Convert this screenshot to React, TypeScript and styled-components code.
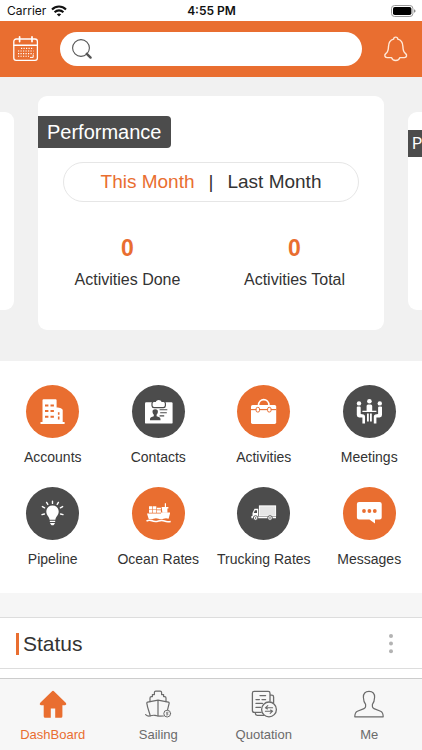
import React from "react";
import styled, { createGlobalStyle } from "styled-components";

const orange = "#e96e30";
const dark = "#4c4c4c";

const GlobalStyle = createGlobalStyle`
  * { box-sizing: border-box; }
  body { margin: 0; background: #fff; font-family: "Liberation Sans", Arial, sans-serif; color: #333; }
  button, input { font: inherit; color: inherit; }
  button { border: 0; padding: 0; background: none; cursor: pointer; }
  svg { display: block; }
`;

const Screen = styled.div`
  display: flex;
  flex-direction: column;
  height: 100vh;
  overflow: hidden;
`;

const StatusBar = styled.div`
  display: grid;
  grid-template-columns: 1fr auto 1fr;
  align-items: center;
  height: 21px;
  flex: none;
  padding: 0 6px 0 7px;
  font-family: Inter, sans-serif;
  font-size: 12px;
  line-height: 21px;
  color: #111;
`;

const Carrier = styled.span`
  display: flex;
  align-items: center;
  gap: 5px;
`;

const Clock = styled.time`
  font-weight: 600;
`;

const Battery = styled.span`
  justify-self: end;
`;

const Header = styled.header`
  display: grid;
  grid-template-columns: 60px 1fr 60px;
  align-items: center;
  height: 56px;
  flex: none;
  background: ${orange};
`;

const HeaderButton = styled.button<{ $side: "left" | "right" }>`
  justify-self: ${(p) => (p.$side === "left" ? "start" : "end")};
  margin: 0 12px;
`;

const SearchBox = styled.label`
  display: flex;
  align-items: center;
  gap: 8px;
  height: 34px;
  padding: 0 16px 0 11px;
  border-radius: 17px;
  background: #fff;
`;

const SearchInput = styled.input`
  flex: 1;
  min-width: 0;
  border: 0;
  outline: 0;
  background: transparent;
  font-size: 16px;
`;

const Main = styled.main`
  flex: 1;
  min-height: 0;
  overflow: hidden;
`;

const Carousel = styled.section`
  display: flex;
  justify-content: center;
  align-items: flex-start;
  gap: 24px;
  padding: 19px 0 31px;
  overflow: hidden;
  background: #f1f1f1;
`;

const Card = styled.article<{ $side?: boolean }>`
  flex: 0 0 calc(100% - 76px);
  height: ${(p) => (p.$side ? "198px" : "234px")};
  margin-top: ${(p) => (p.$side ? "16px" : "0")};
  padding-top: ${(p) => (p.$side ? "18px" : "20px")};
  border-radius: 9px;
  background: #fff;
`;

const Tag = styled.h2<{ $side?: boolean }>`
  width: fit-content;
  margin: 0;
  padding: ${(p) => (p.$side ? "0 4px" : "0 9px")};
  border-radius: 0 4px 4px 0;
  background: ${dark};
  color: #fff;
  font-family: ${(p) => (p.$side ? "Roboto, sans-serif" : "inherit")};
  font-weight: 400;
  font-size: ${(p) => (p.$side ? "16px" : "20px")};
  line-height: ${(p) => (p.$side ? "27px" : "32px")};
`;

const PeriodSwitch = styled.div`
  display: flex;
  justify-content: center;
  align-items: center;
  gap: 14px;
  height: 40px;
  margin: 14px 25px 0;
  border: 1px solid #e6e6e6;
  border-radius: 20px;
  font-size: 19px;
`;

const Period = styled.button<{ $active?: boolean }>`
  color: ${(p) => (p.$active ? orange : "#333")};
`;

const Stats = styled.dl`
  display: grid;
  grid-template-columns: 1fr 1fr;
  margin: 32px 6px 0;
`;

const Stat = styled.div`
  display: flex;
  flex-direction: column-reverse;
  gap: 8px;
  text-align: center;
`;

const StatName = styled.dt`
  font-size: 16px;
  line-height: 20px;
`;

const StatValue = styled.dd`
  margin: 0;
  font-size: 23px;
  line-height: 28px;
  font-weight: 700;
  color: ${orange};
`;

const Shortcuts = styled.nav`
  display: grid;
  grid-template-columns: repeat(4, 1fr);
  row-gap: 20px;
  padding: 24px 0 24px;
`;

const Shortcut = styled.a`
  display: flex;
  flex-direction: column;
  align-items: center;
  gap: 9px;
  color: inherit;
  text-decoration: none;
  font-size: 14px;
  line-height: 20px;
  white-space: nowrap;
`;

const Disc = styled.span<{ $color: string }>`
  width: 53px;
  height: 53px;
  border-radius: 50%;
  background: ${(p) => p.$color};
  color: ${(p) => p.$color};
`;

const StatusSection = styled.section`
  padding-top: 24px;
  background: #f6f6f6;
`;

const StatusHead = styled.div`
  display: flex;
  align-items: center;
  justify-content: space-between;
  height: 52px;
  padding: 2px 25px 0 16px;
  border-top: 1px solid #ddd;
  border-bottom: 1px solid #ddd;
  background: #fff;
`;

const StatusTitle = styled.h2`
  display: flex;
  align-items: center;
  gap: 4px;
  margin: 0;
  font-size: 21px;
  line-height: 24px;
  font-weight: 400;
  &::before {
    content: "";
    width: 3px;
    height: 22px;
    background: ${orange};
  }
`;

const StatusBody = styled.div`
  height: 40px;
  background: #fff;
`;

const TabBar = styled.nav`
  display: grid;
  grid-template-columns: repeat(4, 1fr);
  height: 72px;
  flex: none;
  padding-top: 11px;
  border-top: 1px solid #ccc;
  background: #f7f7f7;
`;

const Tab = styled.a<{ $active?: boolean }>`
  display: flex;
  flex-direction: column;
  align-items: center;
  gap: 9px;
  color: ${(p) => (p.$active ? orange : "#6b6b6b")};
  text-decoration: none;
  font-size: 13px;
  line-height: 15px;
`;

const CalendarIcon = () => (
  <svg width="27" height="28" viewBox="0 0 27 28" fill="none" stroke="#fff" strokeLinecap="round">
    <rect x="1.8" y="4" width="23.6" height="21.4" rx="2.4" strokeWidth="1.3" />
    <path d="M2 10.3H25" strokeWidth="1.5" />
    <path d="M7.6 1.8V6.6M20 1.8V6.6" strokeWidth="1.7" />
    <g strokeWidth="1.1" strokeDasharray="1.2 1.3" strokeLinecap="butt">
      <path d="M9 13.4H21.6M6 16H21.6M6 18.6H21.6M6 21.2H17" />
    </g>
    <path d="M18.4 22.4H21.2V20" strokeWidth="1" />
  </svg>
);

const BellIcon = () => (
  <svg width="28" height="28" viewBox="0 0 28 28" fill="none" stroke="#ffe9d8" strokeWidth="1.4" strokeLinejoin="round" strokeLinecap="round">
    <path d="M11.6 4.2C11.8 1.4 15.6 1.4 15.8 4.2C19.4 5.2 20.8 8 20.9 11.4C21 15.4 21.6 17 23.4 18.4C25.4 20 24.8 22.4 22.4 22.6H17.8C16.8 26.4 10.6 26.4 9.6 22.6H5C2.6 22.4 2 20 4 18.4C5.8 17 6.4 15.4 6.5 11.4C6.6 8 8 5.2 11.6 4.2Z" />
  </svg>
);

const SearchIcon = () => (
  <svg width="22" height="22" viewBox="0 0 22 22" fill="none" stroke="#555">
    <circle cx="10" cy="10" r="8.4" strokeWidth="1.1" />
    <path d="M15.8 15.8L19.6 19.6" strokeWidth="2.4" strokeLinecap="round" />
  </svg>
);

const WifiIcon = () => (
  <svg width="16" height="12" viewBox="0 0 16 12" fill="none" stroke="#111" strokeWidth="2.1">
    <path d="M1 4.4C5 .5 11 .5 15 4.4M3.6 7.2C6.1 4.8 9.9 4.8 12.4 7.2" />
    <path d="M5.8 9.3C7.1 8.1 8.9 8.1 10.2 9.3L8 11.6Z" fill="#111" stroke="none" />
  </svg>
);

const BatteryIcon = () => (
  <svg width="25" height="12" viewBox="0 0 25 12">
    <rect x=".5" y=".5" width="21.4" height="11" rx="3" fill="none" stroke="#999" />
    <rect x="2" y="2" width="18.4" height="8" rx="1.8" />
    <path d="M23 4.2Q24.6 5 24.6 6T23 7.8Z" fill="#888" />
  </svg>
);

const DotsIcon = () => (
  <svg width="12" height="24" viewBox="0 0 12 24" fill="#b3b3b3">
    <circle cx="6" cy="4" r="2" />
    <circle cx="6" cy="11.6" r="2" />
    <circle cx="6" cy="19.2" r="2" />
  </svg>
);

const DiscSvg = ({ children }: { children: React.ReactNode }) => (
  <svg width="53" height="53" viewBox="0 0 53 53" fill="#fff" aria-hidden="true">
    {children}
  </svg>
);

const AccountsIcon = () => (
  <DiscSvg>
    <path d="M16.5 15.2Q16.5 14.2 17.5 14.2H29.6Q30.6 14.2 30.6 15.2V22.4C34 22.6 36.7 23.6 36.7 25V37H38.6V39H14.5V37H16.5Z" />
    <path d="M19 19.5h3.4v1.9H19zM24.5 19.5h3.4v1.9h-3.4zM19 25h3.4v1.9H19zM24.5 25h3.4v1.9h-3.4zM19 30.8h3.4v1.9H19zM24.5 30.8h3.4v1.9h-3.4zM31.9 27.2h1.6v2.6h-1.6zM31.9 31.6h1.6v3h-1.6z" fill="currentColor" />
  </DiscSvg>
);

const ContactsIcon = () => (
  <DiscSvg>
    <rect x="13" y="17.3" width="27.6" height="21.3" rx="1.2" />
    <path d="M23.4 16.4Q24 14.4 26.7 14.4T30 16.4H31.6Q33.4 16.6 33.4 18.6V20.6Q33.2 22.6 31.4 22.6H22Q20.2 22.6 20 20.6V18.6Q20 16.6 21.8 16.4Z" stroke="currentColor" strokeWidth="1.2" />
    <g fill="currentColor">
      <path d="M23.2 24.2C25.3 24.2 26 25.4 25.9 26.7C25.8 28 25.2 29 24.6 29.6V31.2C26.7 31.7 28.5 32.3 28.5 33.9V35.2H18V33.9C18 32.3 19.7 31.7 21.8 31.2V29.6C21.2 29 20.6 28 20.5 26.7C20.4 25.4 21.1 24.2 23.2 24.2Z" />
      <path d="M27.6 24.2h7.7v1.1h-7.7zM28.2 27.2h6.6v1.1h-6.6zM27.6 30.3h4.6v1.1h-4.6z" />
    </g>
  </DiscSvg>
);

const ActivitiesIcon = () => (
  <DiscSvg>
    <path d="M21.5 20.2C21.7 12.8 31.8 12.8 32 20.2" fill="none" stroke="#fff" strokeWidth="1.6" />
    <rect x="14" y="20" width="25.2" height="18.9" rx="1.6" />
    <path d="M14 24.6H39.2" stroke="currentColor" strokeWidth="1.1" />
    <g stroke="currentColor" strokeWidth="1">
      <rect x="19.1" y="22.4" width="3.4" height="4.6" rx="1.4" />
      <rect x="30.6" y="22.4" width="3.4" height="4.6" rx="1.4" />
    </g>
  </DiscSvg>
);

const MeetingsIcon = () => (
  <DiscSvg>
    <circle cx="16" cy="18.4" r="2.2" />
    <circle cx="26.4" cy="16.2" r="2.3" />
    <circle cx="36.8" cy="18.4" r="2.2" />
    <path d="M13.8 22.2Q13.8 21.4 14.8 21.4H16.6Q17.6 21.4 17.7 22.4V29L20.6 29.6Q22 30 22 31.4V38.6H19.4V32.6H16.2Q13.8 32.4 13.8 30Z" />
    <path d="M39 22.2Q39 21.4 38 21.4H36.2Q35.2 21.4 35.1 22.4V29L32.2 29.6Q30.8 30 30.8 31.4V38.6H33.4V32.6H36.6Q39 32.4 39 30Z" />
    <path d="M19.4 25.7H33.4V27H19.4ZM23.6 25.8V21Q23.6 19.4 25 19.4H27.8Q29.2 19.4 29.2 21V25.8ZM24 28.4h1.8v8H24zM27 28.4h1.8v8H27z" />
  </DiscSvg>
);

const PipelineIcon = () => (
  <DiscSvg>
    <path d="M26.5 18.5C30.3 18.5 32.7 21.2 32.7 24.5C32.7 28.4 29.6 29.7 29.4 32.8H23.6C23.4 29.7 20.3 28.4 20.3 24.5C20.3 21.2 22.7 18.5 26.5 18.5ZM23.8 33.7H29.2V35.1H23.8ZM24 35.9H29L28.3 37.2L27.4 38.2H25.6L24.7 37.2Z" />
    <path d="M26.5 16.4V14.2M21.8 17.4L20.6 15.4M31.2 17.4L32.4 15.4M18.6 20.8L16.4 19.6M34.4 20.8L36.6 19.6M18.4 27L16 27.6M34.6 27L37 27.6" fill="none" stroke="#fff" strokeWidth="1.4" strokeLinecap="round" />
  </DiscSvg>
);

const OceanIcon = () => (
  <DiscSvg>
    <path d="M15 26.4H29V25.6H38V26.4L36.6 31.8Q34 30.8 31.5 31.8T26.5 31.8T21.5 31.8T16.6 31.8Z" />
    <path d="M17 19.3h3.4v2.9H17zM21 19.3h3.3v2.9H21zM17 22.8h3.4v2.9H17zM21 22.8h3.3v2.9H21zM24.9 20.8h4v1.8h-4zM24.9 23.2h4v2.5h-4zM29.6 20h6.8v1.5h-1v4.2h-5zM32.8 16.3h1.2v4h-1.2z" />
    <path d="M14.5 34.2Q17 32.4 20 33.8T26.5 34T32.5 34T38.7 34.4" fill="none" stroke="#fff" strokeWidth="1.5" />
  </DiscSvg>
);

const TruckIcon = () => (
  <DiscSvg>
    <rect x="22.4" y="18.9" width="16.2" height="10" fill="#e6e6e6" stroke="#fff" />
    <path d="M21.2 21.8H17.5L15.5 26V29H14.4V31.2H39V29.8H21.2Z" />
    <path d="M18 23.2H20V26H16.7Z" fill="currentColor" />
    <g stroke="currentColor" strokeWidth=".9">
      <circle cx="18.6" cy="31" r="2.3" />
      <circle cx="33" cy="31" r="2.3" />
    </g>
    <g fill="currentColor">
      <circle cx="18.6" cy="31" r=".8" />
      <circle cx="33" cy="31" r=".8" />
    </g>
  </DiscSvg>
);

const MessagesIcon = () => (
  <DiscSvg>
    <path d="M16 15H36.6Q38.7 15 38.7 17.1V30.5Q38.7 32.6 36.6 32.6H32V36.6L26.4 32.6H16Q13.9 32.6 13.9 30.5V17.1Q13.9 15 16 15Z" />
    <g fill="currentColor">
      <circle cx="21" cy="24" r="1.9" />
      <circle cx="26.4" cy="24" r="1.9" />
      <circle cx="31.8" cy="24" r="1.9" />
    </g>
  </DiscSvg>
);

const HomeIcon = () => (
  <svg width="28" height="28" viewBox="0 0 28 28" fill="currentColor">
    <path d="M12.8 1.4Q14 .3 15.2 1.4L27 13Q28 14.8 26 15.2H23.4V26.2Q23.4 27.7 21.9 27.7H16.2V18.4H11.8V27.7H6.2Q4.7 27.7 4.7 26.2V15.2H2Q0 14.8 1 13Z" />
  </svg>
);

const SailingIcon = () => (
  <svg width="28" height="28" viewBox="0 0 28 28" fill="none" stroke="currentColor" strokeWidth="1.2" strokeLinejoin="round" strokeLinecap="round">
    <path d="M6 11.6V8Q6 6.6 7.4 6.6H8.4V4.6H10.4V2.6Q10.4 1.2 11.8 1.2H16.2Q17.6 1.2 17.6 2.6V4.6H19.6V6.6H20.6Q22 6.6 22 8V11.6" />
    <path d="M6.2 25.8C5.4 21.6 3.6 19 2.8 13.2Q2.8 12.4 3.6 12.2L14 10.2L24.4 12.2Q25.2 12.4 25.2 13.2L23.6 19.6M14 10.4V26" />
    <path d="M1.6 24.6Q3.8 26.6 6.4 25.8T11 25.4T14 26T19.4 26" />
    <circle cx="23.2" cy="23.6" r="3.4" strokeWidth="1" />
    <path d="M24 22.3H22.6V23.6H23.8V24.9H22.4" strokeWidth=".8" />
  </svg>
);

const QuotationIcon = () => (
  <svg width="28" height="28" viewBox="0 0 28 28" fill="none" stroke="currentColor" strokeWidth="1.3" strokeLinejoin="round" strokeLinecap="round">
    <path d="M11 22.4H4.2Q2.4 22.4 2.4 20.6V3.2Q2.4 1.4 4.2 1.4H18.2Q20 1.4 20 3.2V11.2M20.4 5.2H21.8Q23.6 5.2 23.6 7V12.6M5.4 22.6V23.6Q5.4 25.4 7.2 25.4H14" />
    <path d="M10 5.6H15.6M6 9.6H9.4M12 9.6H15.6M6 13.4H12.4M6 17.4H10.6" />
    <circle cx="19" cy="19.4" r="7.4" />
    <path d="M22.6 17.8H15.4L17.8 15.6M15.4 21.2H22.6L20.2 23.4M15.4 17.8L17.4 19M22.6 21.2L20.6 20" strokeWidth="1.1" />
  </svg>
);

const MeIcon = () => (
  <svg width="30" height="28" viewBox="0 0 30 28" fill="none" stroke="currentColor" strokeWidth="1.2" strokeLinejoin="round">
    <path d="M15 1.4C18.8 1.4 20.8 3.6 20.6 7.4C20.5 10.6 19.6 12.8 18.4 14.4V16.6C18.4 17.8 18.9 18.2 20 18.6L26.6 21.2C28.6 22 29.2 23.4 29.2 26.8H.8C.8 23.4 1.4 22 3.4 21.2L10 18.6C11.1 18.2 11.6 17.8 11.6 16.6V14.4C10.4 12.8 9.5 10.6 9.4 7.4C9.2 3.6 11.2 1.4 15 1.4Z" />
  </svg>
);

const shortcuts = [
  { label: "Accounts", color: orange, Icon: AccountsIcon },
  { label: "Contacts", color: dark, Icon: ContactsIcon },
  { label: "Activities", color: orange, Icon: ActivitiesIcon },
  { label: "Meetings", color: dark, Icon: MeetingsIcon },
  { label: "Pipeline", color: dark, Icon: PipelineIcon },
  { label: "Ocean Rates", color: orange, Icon: OceanIcon },
  { label: "Trucking Rates", color: dark, Icon: TruckIcon },
  { label: "Messages", color: orange, Icon: MessagesIcon },
];

const tabs = [
  { label: "DashBoard", Icon: HomeIcon, active: true },
  { label: "Sailing", Icon: SailingIcon },
  { label: "Quotation", Icon: QuotationIcon },
  { label: "Me", Icon: MeIcon },
];

const stats = [
  { name: "Activities Done", value: 0 },
  { name: "Activities Total", value: 0 },
];

export default function App() {
  return (
    <Screen>
      <GlobalStyle />
      <StatusBar>
        <Carrier>
          Carrier
          <WifiIcon />
        </Carrier>
        <Clock>4:55 PM</Clock>
        <Battery>
          <BatteryIcon />
        </Battery>
      </StatusBar>
      <Header>
        <HeaderButton $side="left" aria-label="Calendar">
          <CalendarIcon />
        </HeaderButton>
        <SearchBox>
          <SearchIcon />
          <SearchInput type="search" aria-label="Search" />
        </SearchBox>
        <HeaderButton $side="right" aria-label="Notifications">
          <BellIcon />
        </HeaderButton>
      </Header>
      <Main>
        <Carousel>
          <Card $side />
          <Card>
            <Tag>Performance</Tag>
            <PeriodSwitch>
              <Period $active>This Month</Period>
              <span>|</span>
              <Period>Last Month</Period>
            </PeriodSwitch>
            <Stats>
              {stats.map((s) => (
                <Stat key={s.name}>
                  <StatName>{s.name}</StatName>
                  <StatValue>{s.value}</StatValue>
                </Stat>
              ))}
            </Stats>
          </Card>
          <Card $side>
            <Tag $side>P</Tag>
          </Card>
        </Carousel>
        <Shortcuts>
          {shortcuts.map(({ label, color, Icon }) => (
            <Shortcut key={label} href="#">
              <Disc $color={color}>
                <Icon />
              </Disc>
              {label}
            </Shortcut>
          ))}
        </Shortcuts>
        <StatusSection>
          <StatusHead>
            <StatusTitle>Status</StatusTitle>
            <button aria-label="Status options">
              <DotsIcon />
            </button>
          </StatusHead>
          <StatusBody />
        </StatusSection>
      </Main>
      <TabBar>
        {tabs.map(({ label, Icon, active }) => (
          <Tab key={label} href="#" $active={active}>
            <Icon />
            {label}
          </Tab>
        ))}
      </TabBar>
    </Screen>
  );
}
